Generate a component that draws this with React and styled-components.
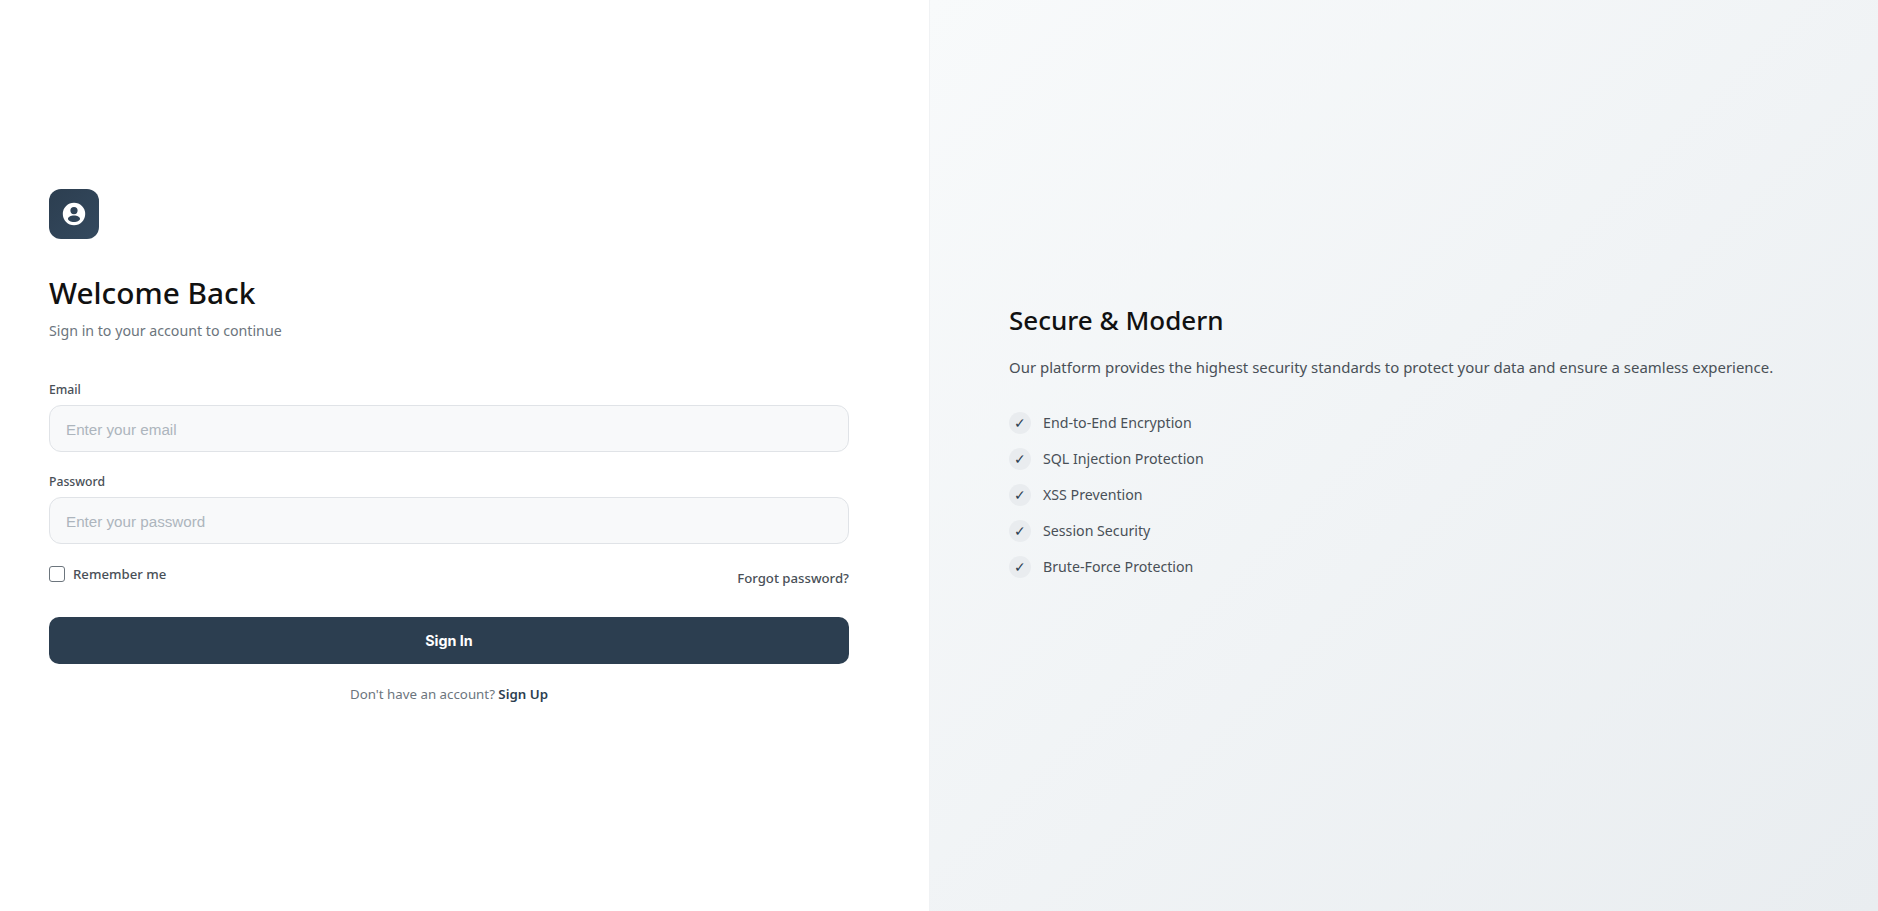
import React from 'react'
import styled, { createGlobalStyle } from 'styled-components'

const GlobalStyle = createGlobalStyle`
  html, body {
    margin: 0;
    padding: 0;
    background: #fff;
    font-family: 'Noto Sans', 'Open Sans', sans-serif;
  }
  * {
    box-sizing: border-box;
  }
`

const Page = styled.div`
  display: flex;
  height: 911px;
  overflow: hidden;
`

const FormPanel = styled.section`
  width: 929px;
  padding: 189px 80px 0 49px;
  background: #fff;
`

const InfoPanel = styled.section`
  flex: 1;
  display: flex;
  flex-direction: column;
  padding: 303px 80px 0;
  background: linear-gradient(135deg, #f8fafb 0%, #e9edf0 100%);
  box-shadow: inset 1px 0 0 #f0f2f4;
`

const Logo = styled.div`
  display: flex;
  align-items: center;
  justify-content: center;
  width: 50px;
  height: 50px;
  border-radius: 12px;
  background: linear-gradient(135deg, #2c3e50, #34495e);
  margin-bottom: 34px;
`

const Title = styled.h1`
  margin: 0;
  font-size: 29.8px;
  line-height: 40px;
  font-weight: 500;
  color: #111;
`

const Subtitle = styled.p`
  margin: 8px 0 0;
  font-size: 14.2px;
  line-height: 20px;
  color: #6c757d;
`

const Form = styled.form`
  display: flex;
  flex-direction: column;
  margin-top: 41px;
`

const Field = styled.div`
  display: flex;
  flex-direction: column;
  margin-bottom: 22px;
`

const Label = styled.label`
  font-size: 12.2px;
  line-height: 16px;
  font-weight: 500;
  color: #495057;
  margin-bottom: 7px;
`

const Input = styled.input`
  height: 47px;
  padding: 1px 16px 0;
  border: 1px solid #e0e3e7;
  border-radius: 12px;
  background: #f8f9fa;
  font-family: 'Liberation Sans', Arial, sans-serif;
  font-size: 15.2px;
  color: #212529;

  &::placeholder {
    color: #adb5bd;
    opacity: 1;
  }
`

const OptionsRow = styled.div`
  display: flex;
  justify-content: space-between;
  align-items: flex-start;
  margin-bottom: 31px;
`

const Remember = styled.label`
  display: flex;
  align-items: center;
  gap: 8px;
  font-size: 13.2px;
  line-height: 16px;
  font-weight: 500;
  color: #495057;
`

const CheckBox = styled.input`
  width: 16px;
  height: 16px;
  margin: 0;
  appearance: none;
  background: #fff;
  border: 1px solid #6c757d;
  border-radius: 3px;
`

const ForgotLink = styled.a`
  margin-top: 4px;
  font-size: 13.2px;
  line-height: 16px;
  font-weight: 500;
  color: #495057;
`

const SubmitButton = styled.button`
  height: 47px;
  border: none;
  border-radius: 10px;
  background: #2c3e50;
  color: #fff;
  font-family: Inter, sans-serif;
  font-size: 14.3px;
  font-weight: 700;
`

const Footer = styled.p`
  margin: 21px 0 0;
  text-align: center;
  font-size: 13.3px;
  line-height: 18px;
  color: #6c757d;
`

const SignUpLink = styled.a`
  font-weight: 600;
  color: #2c3e50;
`

const InfoTitle = styled.h2`
  margin: 0;
  font-size: 26px;
  line-height: 34px;
  font-weight: 500;
  color: #111;
`

const InfoText = styled.p`
  margin: 18px 0 0;
  font-size: 14.95px;
  line-height: 24px;
  color: #495057;
`

const FeatureList = styled.ul`
  display: flex;
  flex-direction: column;
  gap: 14px;
  list-style: none;
  margin: 33px 0 0;
  padding: 0;
`

const Feature = styled.li`
  display: flex;
  align-items: center;
  gap: 12px;
  font-size: 14.2px;
  line-height: 22px;
  color: #495057;
`

const Tick = styled.span`
  display: flex;
  align-items: center;
  justify-content: center;
  width: 22px;
  height: 22px;
  border-radius: 50%;
  background: #e9ecef;
  color: #2c3e50;
  font-size: 14px;
`

const features = [
  'End-to-End Encryption',
  'SQL Injection Protection',
  'XSS Prevention',
  'Session Security',
  'Brute-Force Protection'
]

const App = () => (
  <Page>
    <GlobalStyle />
    <FormPanel>
      <Logo>
        <svg width='24' height='24' viewBox='0 0 24 24' fill='#fff'>
          <path
            fillRule='evenodd'
            d='M12 0.8a11.2 11.2 0 1 0 0 22.4 11.2 11.2 0 0 0 0-22.4zM12 5a3.6 3.6 0 1 1 0 7.2 3.6 3.6 0 0 1 0-7.2zM12 13.6c3.3 0 6 1.5 6 3.2 0 1.7-2.7 3.2-6 3.2s-6-1.5-6-3.2c0-1.7 2.7-3.2 6-3.2z'
          />
        </svg>
      </Logo>
      <Title>Welcome Back</Title>
      <Subtitle>Sign in to your account to continue</Subtitle>
      <Form>
        <Field>
          <Label htmlFor='email'>Email</Label>
          <Input id='email' type='email' placeholder='Enter your email' />
        </Field>
        <Field>
          <Label htmlFor='password'>Password</Label>
          <Input id='password' type='password' placeholder='Enter your password' />
        </Field>
        <OptionsRow>
          <Remember>
            <CheckBox type='checkbox' />
            Remember me
          </Remember>
          <ForgotLink>Forgot password?</ForgotLink>
        </OptionsRow>
        <SubmitButton type='button'>Sign In</SubmitButton>
      </Form>
      <Footer>
        Don't have an account? <SignUpLink>Sign Up</SignUpLink>
      </Footer>
    </FormPanel>
    <InfoPanel>
      <InfoTitle>Secure &amp; Modern</InfoTitle>
      <InfoText>
        Our platform provides the highest security standards to protect your data and ensure a
        seamless experience.
      </InfoText>
      <FeatureList>
        {features.map(feature => (
          <Feature key={feature}>
            <Tick>✓</Tick>
            {feature}
          </Feature>
        ))}
      </FeatureList>
    </InfoPanel>
  </Page>
)

export default App
